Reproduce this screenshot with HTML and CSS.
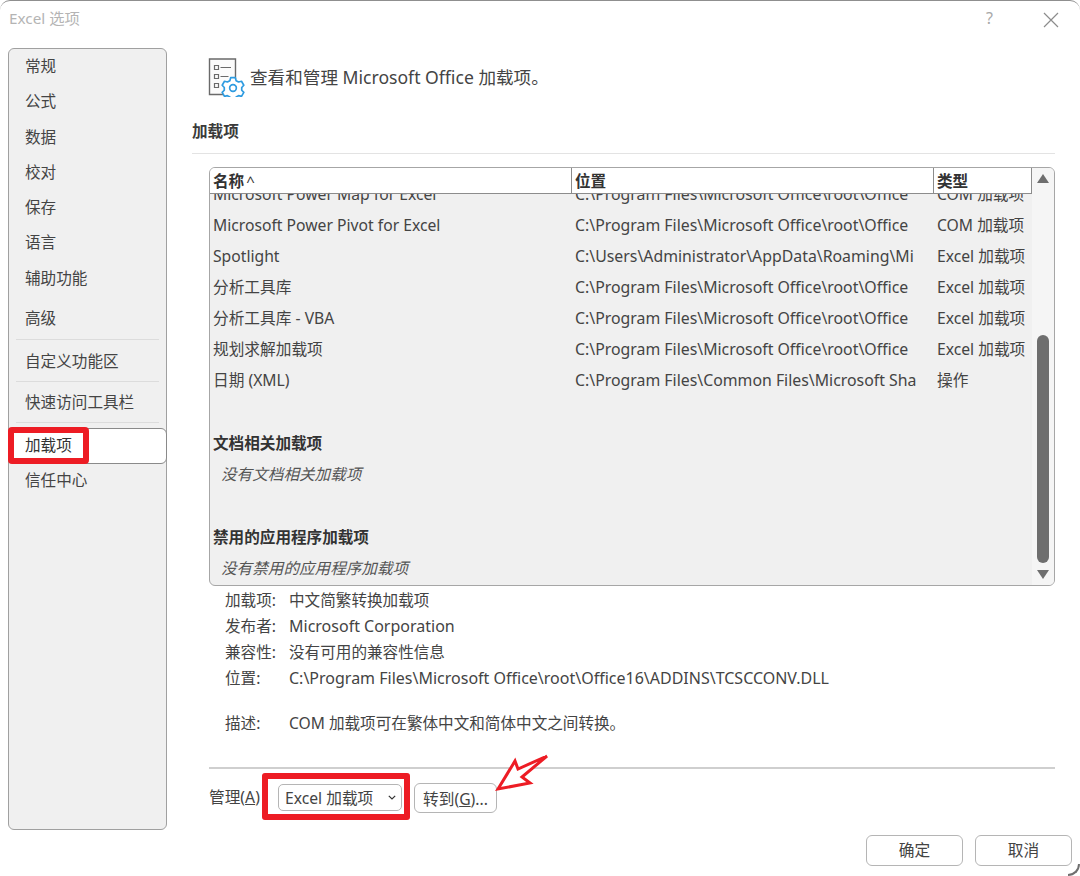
FILE: index.html
```html
<!DOCTYPE html>
<html lang="zh">
<head>
<meta charset="utf-8">
<title>Excel 选项</title>
<link rel="stylesheet" href="styles.css">
</head>
<body>
<div class="window">
  <header class="titlebar">
    <span class="title">Excel 选项</span>
    <span class="help">?</span>
    <svg class="close" width="16" height="16" viewBox="0 0 16 16"><path d="M1 1L15 15M15 1L1 15" stroke="#8c8c8c" stroke-width="1.2" fill="none"/></svg>
  </header>
  <div class="content">
    <nav class="sidebar">
      <a class="nav g1">常规</a>
      <a class="nav g1">公式</a>
      <a class="nav g1">数据</a>
      <a class="nav g1">校对</a>
      <a class="nav g1">保存</a>
      <a class="nav g1">语言</a>
      <a class="nav g1">辅助功能</a>
      <a class="nav g2">高级</a>
      <div class="divider"></div>
      <a class="nav g3">自定义功能区</a>
      <div class="divider d2"></div>
      <a class="nav g3">快速访问工具栏</a>
      <div class="divider d3"></div>
      <a class="nav selected">加载项</a>
      <a class="nav after">信任中心</a>
      <div class="mark-nav"></div>
    </nav>
    <main class="main">
      <div class="intro">
        <svg class="intro-icon" width="40" height="40" viewBox="0 0 40 40">
          <path d="M27.5 22V2H1.500V37.500H21" fill="#fbfbfb" stroke="#6a6a6a" stroke-width="1.400"/>
          <path d="M6.500 8.500h4v4h-4zM6.500 17.500h4v4h-4zM6.500 26.500h4v4h-4z" fill="none" stroke="#6a6a6a" stroke-width="1.200"/>
          <path d="M12.500 10.500h10.500M12.500 19.500h8" stroke="#6a6a6a" stroke-width="1.200" fill="none"/>
          <g transform="translate(25 31) scale(1.050)" fill="#fff" stroke="#2e9be0" stroke-width="1.600" stroke-linejoin="round">
            <path d="M-2.200-9.800h4.400l.8 2.800 2.300 1.300 2.800-.7 2.200 3.800-2 2.100v2.600l2 2.100-2.200 3.800-2.800-.7-2.300 1.300-.8 2.800h-4.400l-.8-2.800-2.300-1.300-2.800.7-2.200-3.800 2-2.100v-2.600l-2-2.100 2.200-3.800 2.800.7 2.300-1.300z"/>
            <circle r="3.200"/>
          </g>
        </svg>
        <h1 class="intro-text">查看和管理 Microsoft Office 加载项。</h1>
      </div>
      <h2 class="section">加载项</h2>
      <section class="listbox">
        <div class="table">
          <div class="thead">
            <div class="th c1">名称<span class="caret">^</span></div>
            <div class="th c2">位置</div>
            <div class="th c3">类型</div>
          </div>
          <div class="tbody">
            <div class="rows">
              <div class="row"><span class="c1">Microsoft Power Map for Excel</span><span class="c2">C:\Program Files\Microsoft Office\root\Office</span><span class="c3">COM 加载项</span></div>
              <div class="row"><span class="c1">Microsoft Power Pivot for Excel</span><span class="c2">C:\Program Files\Microsoft Office\root\Office</span><span class="c3">COM 加载项</span></div>
              <div class="row"><span class="c1">Spotlight</span><span class="c2">C:\Users\Administrator\AppData\Roaming\Mi</span><span class="c3">Excel 加载项</span></div>
              <div class="row"><span class="c1">分析工具库</span><span class="c2">C:\Program Files\Microsoft Office\root\Office</span><span class="c3">Excel 加载项</span></div>
              <div class="row"><span class="c1">分析工具库 - VBA</span><span class="c2">C:\Program Files\Microsoft Office\root\Office</span><span class="c3">Excel 加载项</span></div>
              <div class="row"><span class="c1">规划求解加载项</span><span class="c2">C:\Program Files\Microsoft Office\root\Office</span><span class="c3">Excel 加载项</span></div>
              <div class="row"><span class="c1">日期 (XML)</span><span class="c2">C:\Program Files\Common Files\Microsoft Sha</span><span class="c3">操作</span></div>
              <div class="row"></div>
              <div class="row group">文档相关加载项</div>
              <div class="row empty">没有文档相关加载项</div>
              <div class="row tall"></div>
              <div class="row group">禁用的应用程序加载项</div>
              <div class="row empty">没有禁用的应用程序加载项</div>
            </div>
          </div>
        </div>
        <div class="scrollbar">
          <svg width="12" height="9" viewBox="0 0 12 9"><path d="M6 0L12 9H0Z" fill="#6e6e6e"/></svg>
          <div class="thumb"></div>
          <svg width="12" height="9" viewBox="0 0 12 9"><path d="M6 9L12 0H0Z" fill="#6e6e6e"/></svg>
        </div>
      </section>
      <dl class="details">
        <div class="detail"><dt>加载项:</dt><dd>中文简繁转换加载项</dd></div>
        <div class="detail"><dt>发布者:</dt><dd class="latin">Microsoft Corporation</dd></div>
        <div class="detail"><dt>兼容性:</dt><dd>没有可用的兼容性信息</dd></div>
        <div class="detail"><dt>位置:</dt><dd class="latin">C:\Program Files\Microsoft Office\root\Office16\ADDINS\TCSCCONV.DLL</dd></div>
        <div class="detail desc"><dt>描述:</dt><dd>COM 加载项可在繁体中文和简体中文之间转换。</dd></div>
      </dl>
      <div class="manage">
        <span class="manage-label">管理(<u>A</u>)</span>
        <div class="select"><span>Excel 加载项</span>
          <svg width="8" height="5" viewBox="0 0 8 5"><path d="M.8.8L4 4l3.200-3.200" fill="none" stroke="#333" stroke-width="1.200"/></svg>
        </div>
        <button class="btn go">转到(<u>G</u>)...</button>
        <div class="mark-box"></div>
        <svg class="mark-arrow" width="54" height="42" viewBox="0 0 54 42"><path d="M3 35L20 7L23 15L52 2L27 23L35 29Z" fill="#fff" stroke="#ed1c24" stroke-width="3" stroke-linejoin="miter"/></svg>
      </div>
      <div class="actions">
        <button class="btn action">确定</button>
        <button class="btn action">取消</button>
      </div>
    </main>
  </div>
  <div class="corner"></div>
</div>
</body>
</html>
```
FILE: styles.css
```css
* { box-sizing: border-box; }
html, body { margin: 0; padding: 0; height: 100%; background: #fff; }
body {
  font-family: "Noto Sans", "Noto Sans CJK SC", sans-serif;
  font-size: 15.7px;
  color: #444;
  overflow: hidden;
}
.window {
  width: 1080px;
  height: 876px;
  background: #fff;
  border-top: 1px solid #8f8f8f;
  border-radius: 10px 10px 0 0;
  display: flex;
  flex-direction: column;
  position: relative;
  overflow: hidden;
}
.corner {
  position: absolute;
  right: 0;
  bottom: 0;
  width: 12px;
  height: 12px;
  border-right: 2px solid #6f6f6f;
  border-bottom: 2px solid #6f6f6f;
  border-bottom-right-radius: 12px;
}
.titlebar {
  height: 47px;
  flex: none;
  display: flex;
  align-items: flex-start;
  padding: 7px 22px 0 9px;
}
.title { color: #b4b4b4; font-size: 15.300px; line-height: 20px; flex: 1; }
.help { color: #a8a8a8; font-size: 16px; line-height: 20px; margin-right: 50px; }
.close { margin-top: 4px; margin-right: -1px; }
.content { flex: 1; display: flex; padding-left: 8px; }
.sidebar {
  width: 159px;
  height: 782px;
  flex: none;
  background: #f0f0f0;
  border: 1px solid #a0a0a0;
  border-radius: 6px;
  display: flex;
  flex-direction: column;
  position: relative;
  font-size: 15.600px;
}
.nav {
  display: block;
  height: 35.300px;
  line-height: 35.300px;
  padding-left: 16px;
  color: #444;
  flex: none;
}
.nav.g2 { margin-top: 4.500px; }
.nav.g3 { height: 35px; line-height: 37px; }
.divider { height: 1px; background: #dcdcdc; margin: 3px 7px; flex: none; }
.divider.d2 { margin: 3px 7px 2px; }
.divider.d3 { margin: 3px 7px 5px; }
.selected {
  height: 36px;
  line-height: 33px;
  background: #fff;
  border: 1px solid #8a8a8a;
  border-radius: 6px;
  margin-right: -1px;
  padding-left: 15px;
  color: #333;
}
.nav.after { height: 34px; line-height: 33px; }
.mark-nav {
  position: absolute;
  left: -1px;
  top: 378px;
  width: 81px;
  height: 37px;
  border: 6px solid #ed1c24;
  border-radius: 4px;
}
.main { width: 863px; margin-left: 25px; flex: none; display: flex; flex-direction: column; }
.intro { display: flex; align-items: center; height: 40px; margin-top: 9px; padding-left: 16px; }
.intro-icon { flex: none; }
.intro-text { font-size: 17.600px; font-weight: 400; margin: 0 0 0 2px; color: #444; line-height: 40px; }
.section {
  font-size: 15.600px;
  font-weight: 700;
  margin: 0;
  color: #3a3a3a;
  line-height: 20px;
  padding-top: 24px;
  height: 57px;
  border-bottom: 1px solid #e3e3e3;
}
.listbox {
  margin: 13px 0 0 17px;
  width: 846px;
  height: 419px;
  flex: none;
  background: #f0f0f0;
  border: 1px solid #a6a6a6;
  border-radius: 6px;
  display: flex;
  overflow: hidden;
}
.table { width: 822px; flex: none; display: flex; flex-direction: column; }
.thead { display: flex; height: 26px; flex: none; background: #fff; border-bottom: 1px solid #8c8c8c; border-right: 1px solid #8c8c8c; }
.th { font-weight: 700; color: #333; font-size: 15.600px; line-height: 27px; padding-left: 3px; border-right: 1px solid #8c8c8c; }
.th.c3 { border-right: 0; }
.caret { font-weight: 400; font-size: 15px; margin-left: 2px; }
.c1 { width: 362px; flex: none; }
.c2 { width: 362px; flex: none; }
.c3 { width: 97px; flex: none; }
.row .c2 { font-size: 15.850px; }
.tbody { flex: 1; overflow: hidden; }
.rows { margin-top: -15px; }
.row { display: flex; height: 31px; line-height: 31px; padding-left: 3px; white-space: nowrap; color: #444; }
.row.tall { height: 32px; }
.row.group { font-weight: 700; color: #333; font-size: 15.600px; margin-top: 1px; margin-bottom: -1px; }
.row.empty { font-style: italic; padding-left: 11px; color: #555; font-size: 15.600px; margin-top: 1px; margin-bottom: -1px; }
.scrollbar {
  flex: 1;
  background: #f5f5f5;
  display: flex;
  flex-direction: column;
  align-items: center;
  padding: 6px 0 6px;
}
.thumb { width: 12px; height: 228px; background: #6e6e6e; border-radius: 6px; margin: 152px 0 7px; }
.details { margin: 0; padding: 1px 0 0 33px; height: 181px; flex: none; font-size: 15.600px; }
.detail { display: flex; height: 26px; line-height: 26px; }
.detail dt { width: 64px; flex: none; }
.detail dd { margin: 0; }
.detail dd.latin { font-size: 16px; }
.detail.desc { margin-top: 19px; }
.manage {
  margin-left: 17px;
  width: 846px;
  border-top: 2px solid #cfcfcf;
  height: 68px;
  flex: none;
  display: flex;
  align-items: flex-start;
  position: relative;
}
.manage-label { margin-top: 16px; line-height: 24px; width: 69px; flex: none; }
.select {
  margin-top: 15px;
  width: 124px;
  height: 27px;
  border: 1px solid #b5b5b5;
  border-radius: 5px;
  background: #fff;
  display: flex;
  align-items: center;
  justify-content: space-between;
  padding: 0 5px 0 6px;
  flex: none;
}
.btn {
  font: inherit;
  background: #fff;
  color: #444;
  border: 1px solid #b5b5b5;
  border-radius: 6px;
  padding: 0;
}
.go { margin: 14px 0 0 12px; width: 83px; height: 30px; }
.mark-box {
  position: absolute;
  left: 53px;
  top: 4px;
  width: 148px;
  height: 47px;
  border: 6px solid #ed1c24;
  border-radius: 3px;
}
.mark-arrow { position: absolute; left: 286px; top: -15px; }
.actions { display: flex; gap: 12px; margin-left: 674px; }
.action { width: 97px; height: 31px; flex: none; padding-bottom: 2px; }
```
